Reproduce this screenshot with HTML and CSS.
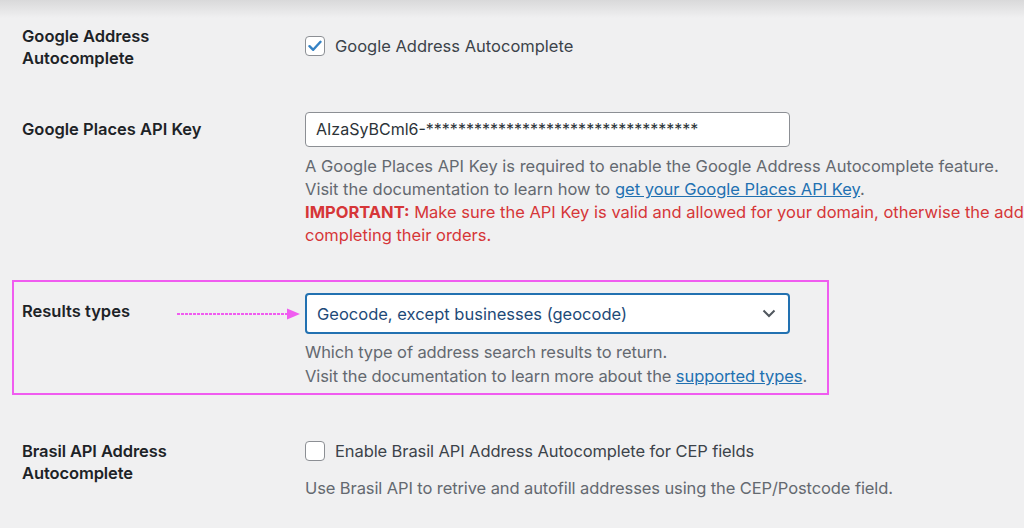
FILE: index.html
```html
<html lang="en"><head>
    <meta charset="UTF-8">
    <title>Address Autocomplete Settings</title>
    <link rel="stylesheet" href="styles.css">
</head>
<body>
    <div class="top-shade"></div>
    <div class="settings">
        <div class="row row-first">
            <div class="label">Google Address<br>Autocomplete</div>
            <div class="field field-check">
                <label class="check-line">
                    <span class="checkbox checked">
                        <svg width="14" height="12" viewBox="0 0 14 12"><path d="M1.5 6.2 L5.2 9.8 L12.5 1.8" fill="none" stroke="#3582c4" stroke-width="2.4" stroke-linecap="round" stroke-linejoin="round"/></svg>
                    </span>
                    Google Address Autocomplete
                </label>
            </div>
        </div>

        <div class="row row-key">
            <div class="label label-key">Google Places API Key</div>
            <div class="field">
                <div class="text-input">AIzaSyBCml6-**********************************</div>
                <p class="description">
                    A Google Places API Key is required to enable the Google Address Autocomplete feature.<br>
                    Visit the documentation to learn how to <a href="#">get your Google Places API Key</a>.<br>
                    <span class="warning"><strong>IMPORTANT:</strong> Make sure the API Key is valid and allowed for your domain, otherwise the address autocomplete will not work for customers<br>completing their orders.</span>
                </p>
            </div>
        </div>

        <div class="row row-highlight">
            <div class="label label-types">Results types</div>
            <div class="pointer">
                <svg width="124" height="12" viewBox="0 0 124 12"><line x1="0" y1="6" x2="112" y2="6" stroke="#f05cf0" stroke-width="2" stroke-dasharray="3 1"/><path d="M110 0.5 L123 6 L110 11.5 Z" fill="#f05cf0"/></svg>
            </div>
            <div class="field">
                <div class="select">
                    <span>Geocode, except businesses (geocode)</span>
                    <svg width="14" height="9" viewBox="0 0 14 9"><path d="M1.5 1.5 L7 7 L12.5 1.5" fill="none" stroke="#50575e" stroke-width="2"/></svg>
                </div>
                <p class="description narrow">
                    Which type of address search results to return.<br>
                    Visit the documentation to learn more about the <a href="#">supported types</a>.
                </p>
            </div>
        </div>

        <div class="row row-brasil">
            <div class="label narrow">Brasil API Address<br>Autocomplete</div>
            <div class="field">
                <label class="check-line narrow">
                    <span class="checkbox"></span>
                    Enable Brasil API Address Autocomplete for CEP fields
                </label>
                <p class="description narrow brasil-desc">Use Brasil API to retrive and autofill addresses using the CEP/Postcode field.</p>
            </div>
        </div>
    </div>
</body></html>
```

FILE: styles.css
```css
body {
    margin: 0;
    font-family: Inter, "Liberation Sans", Arial, sans-serif;
    font-size: 16.5px;
    background-color: #f0f0f1;
    color: #1d2327;
    overflow: hidden;
    -webkit-font-smoothing: antialiased;
}
.top-shade {
    height: 18px;
    background: linear-gradient(to bottom, #d9d9da, #f0f0f1);
}
.settings {
    display: flex;
    flex-direction: column;
}
.row {
    display: grid;
    grid-template-columns: 283px 1fr;
    align-items: start;
    padding-left: 22px;
    white-space: nowrap;
}
.label {
    font-weight: 600;
    line-height: 22px;
}
.row-first {
    padding-top: 7px;
}
.field-check {
    padding-top: 10px;
}
.check-line {
    display: flex;
    align-items: center;
    gap: 10px;
    line-height: 22px;
    color: #3c434a;
}
.checkbox {
    width: 18px;
    height: 18px;
    border: 1px solid #8c8f94;
    border-radius: 4px;
    background: #fff;
    display: flex;
    align-items: center;
    justify-content: center;
}
.row-key {
    margin-top: 43px;
}
.label-key {
    margin-top: 6px;
}
.text-input {
    width: 473px;
    height: 33px;
    line-height: 33px;
    border: 1px solid #8c8f94;
    border-radius: 4px;
    background: #fff;
    padding-left: 10px;
    color: #2c3338;
    font-size: 16px;
}
.description {
    margin: 8px 0 0;
    line-height: 23px;
    color: #646970;
}
.description a {
    color: #2271b1;
}
.warning {
    color: #d63638;
}
.row-highlight {
    position: relative;
    margin: 33px 0 0 12px;
    width: 805px;
    border: 2px solid #f05cf0;
    padding: 11px 0 5px 8px;
}
.label-types {
    margin-top: 7px;
}
.pointer {
    position: absolute;
    left: 163px;
    top: 26px;
    line-height: 0;
}
.select {
    width: 461px;
    height: 37px;
    border: 2px solid #2271b1;
    border-radius: 4px;
    background: #fff;
    padding: 0 10px;
    display: flex;
    align-items: center;
    justify-content: space-between;
    color: #1e4a78;
}
.select svg {
    margin-right: 2px;
}
.row-highlight .description {
    margin-top: 6px;
    line-height: 24px;
}
.narrow {
    letter-spacing: -0.1px;
}
.row-brasil {
    margin-top: 45px;
}
.brasil-desc {
    margin-top: 15px;
}
```
